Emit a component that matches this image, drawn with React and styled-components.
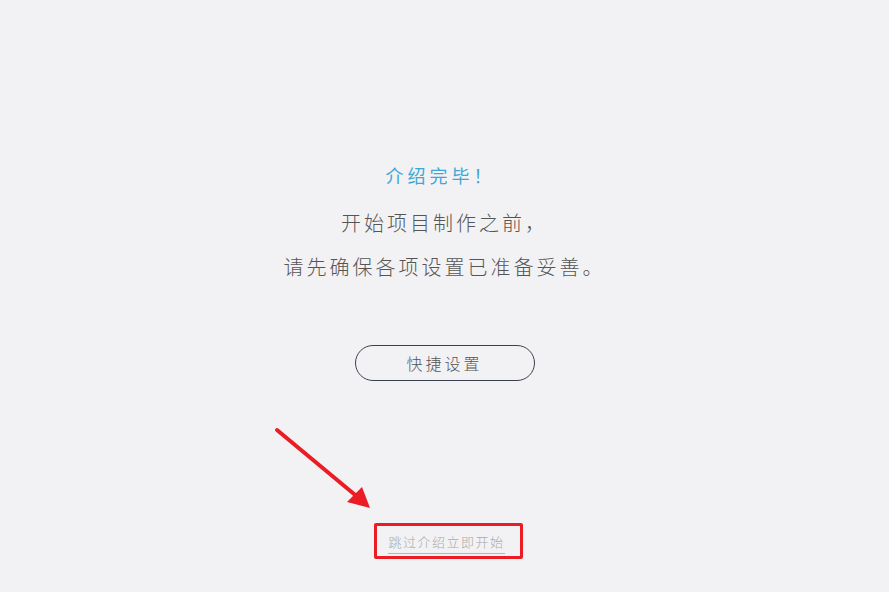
import React from 'react';
import styled, { createGlobalStyle } from 'styled-components';

const GlobalStyle = createGlobalStyle`
  html, body {
    margin: 0;
    padding: 0;
    background: #f2f2f4;
  }
  body {
    font-family: "Noto Sans CJK SC", "Noto Sans", sans-serif;
  }
`;

const Page = styled.div`
  position: relative;
  width: 889px;
  height: 592px;
  display: flex;
  flex-direction: column;
  align-items: center;
  padding-top: 161px;
  box-sizing: border-box;
  overflow: hidden;
`;

const Title = styled.h2`
  margin: 0 0 0 -8px;
  font-size: 18px;
  font-weight: 400;
  letter-spacing: 4px;
  line-height: 28px;
  color: #3fa7d6;
`;

const Message = styled.p`
  margin: 12px 0 0;
  font-size: 20px;
  font-weight: 300;
  letter-spacing: 3px;
  line-height: 44px;
  color: #555;
  text-align: center;
`;

const QuickButton = styled.button`
  margin-top: 56px;
  width: 180px;
  height: 36px;
  border: 1px solid #3a4050;
  border-radius: 18px;
  background: transparent;
  font-family: inherit;
  font-size: 16px;
  font-weight: 300;
  letter-spacing: 3px;
  color: #555;
  cursor: pointer;
`;

const SkipBox = styled.div`
  margin-top: 142px;
  margin-left: 8px;
  padding: 5px 15px 2px 11px;
  border: 3px solid #ec1c24;
  border-radius: 2px;
`;

const SkipLink = styled.a`
  display: block;
  font-size: 13px;
  font-weight: 300;
  letter-spacing: 1.5px;
  line-height: 22px;
  color: #aaa;
  text-decoration: none;
  border-bottom: 1px solid #b5b5b5;
  cursor: pointer;
`;

const Arrow = styled.svg`
  position: absolute;
  left: 270px;
  top: 422px;
`;

const App = () => {
  return (
    <>
      <GlobalStyle />
      <Page>
        <Title>介绍完毕！</Title>
        <Message>
          开始项目制作之前，
          <br />
          请先确保各项设置已准备妥善。
        </Message>
        <QuickButton>快捷设置</QuickButton>
        <SkipBox>
          <SkipLink>跳过介绍立即开始</SkipLink>
        </SkipBox>
        <Arrow width="110" height="95" viewBox="0 0 110 95">
          <line x1="7" y1="8" x2="90" y2="77" stroke="#ec1c24" strokeWidth="4" strokeLinecap="round" />
          <polygon points="100,86 77,80 92,65" fill="#ec1c24" />
        </Arrow>
      </Page>
    </>
  );
};

export default App;
